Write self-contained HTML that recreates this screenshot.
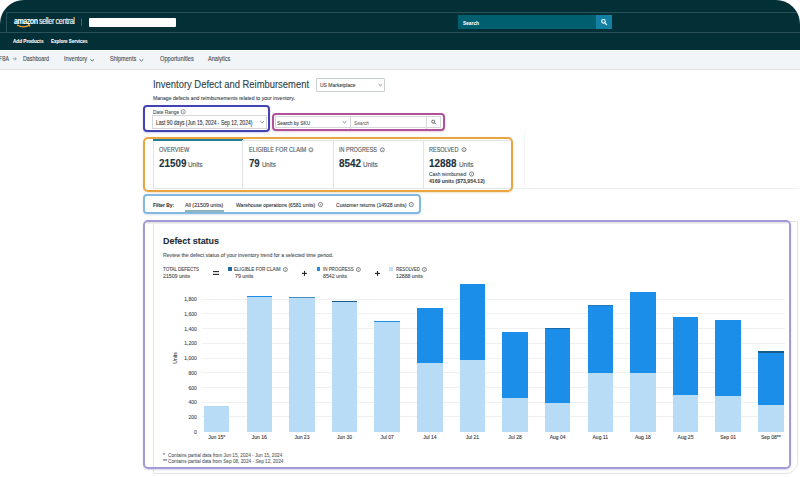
<!DOCTYPE html>
<html><head><meta charset="utf-8"><style>
html,body{margin:0;padding:0;}
body{width:800px;height:477px;overflow:hidden;position:relative;background:#fff;font-family:"Liberation Sans",sans-serif;}
.t{position:absolute;white-space:nowrap;transform-origin:0 0;-webkit-text-stroke:0.1px currentColor;}
.a{position:absolute;box-sizing:border-box;}
</style></head><body>
<!-- header -->
<div class="a" style="left:0;top:0;width:800px;height:50px;background:#032f37;border-radius:24px 24px 0 0;overflow:hidden;">
  <div class="a" style="left:6px;top:11.5px;width:794px;height:1.3px;background:#2c5259;"></div>
  <div class="a" style="left:0;top:31.5px;width:800px;height:1.3px;background:#2c5259;"></div>
  <div class="a" style="left:5.8px;top:12px;width:1.1px;height:20px;background:#2c5259;"></div>
</div>

<div class="a" style="left:89px;top:17.5px;width:87px;height:9px;background:#fff;border-radius:1px;"></div>
<div class="a" style="left:458px;top:15px;width:138px;height:14px;background:#005f6f;"></div>
<div class="a" style="left:596px;top:15px;width:16px;height:14px;background:#127fa3;"></div>
<svg class="a" style="left:0;top:0" width="800" height="50">
  <path d="M17 25 Q23.5 28.6 29.6 25.1" stroke="#eda33a" stroke-width="1.3" fill="none"/>
  <path d="M28 24.4 L30 24.9 L29.6 26.7" stroke="#eda33a" stroke-width="0.9" fill="none"/>
  <line x1="81.5" y1="18.5" x2="81.5" y2="25.8" stroke="#56737a" stroke-width="0.8"/>
  <circle cx="603.4" cy="21.3" r="1.8" stroke="#e8f6fa" stroke-width="1.2" fill="none"/>
  <line x1="604.8" y1="22.7" x2="606.6" y2="24.6" stroke="#e8f6fa" stroke-width="1.3" stroke-linecap="round"/>
</svg>
<!-- nav -->
<div class="a" style="left:0;top:51px;width:800px;height:19px;background:#f2f5f8;border-bottom:1px solid #e0e3e5;"></div>
<svg class="a" style="left:0;top:50px" width="300" height="20">
  <path d="M12.6 8.8 H16.3 M14.8 7.3 L16.4 8.8 L14.8 10.3" stroke="#8a9298" stroke-width="0.8" fill="none"/>
  <path d="M90.3 9.3 L92.2 11 L94.1 9.3" stroke="#4f5a62" stroke-width="0.9" fill="none"/>
  <path d="M139.5 9.3 L141.4 11 L143.3 9.3" stroke="#4f5a62" stroke-width="0.9" fill="none"/>
</svg>
<!-- US marketplace -->
<div class="a" style="left:316.3px;top:78px;width:69.2px;height:13.8px;border:1px solid #c9ced1;border-radius:1px;background:#fff;"></div>
<svg class="a" style="left:300px;top:70px" width="200" height="70">
  <path d="M378.6 14.2 L380.4 15.9 L382.2 14.2" transform="translate(-300,0)" stroke="#555" stroke-width="0.7" fill="none"/>
</svg>
<!-- date range (indigo) -->
<div class="a" style="left:143px;top:105.4px;width:127px;height:26.2px;border:2px solid #4343b3;border-radius:4px;box-shadow:0 1px 2px rgba(80,80,180,0.25);"></div>
<div class="a" style="left:152.4px;top:115.4px;width:115px;height:13.2px;border:1px solid #d5d9dc;background:#fff;"></div>
<!-- sku search (magenta) -->
<div class="a" style="left:272px;top:113.2px;width:172.6px;height:18.3px;border:2px solid #b0519a;border-radius:4px;box-shadow:0 1px 2px rgba(170,70,140,0.25);"></div>
<div class="a" style="left:274.6px;top:116.2px;width:166.2px;height:12.2px;border:1px solid #d5d9dc;background:#fff;"></div>
<div class="a" style="left:350.2px;top:116.4px;width:1px;height:12.4px;background:#d5d9dc;"></div>
<div class="a" style="left:426.3px;top:116.4px;width:1px;height:12.4px;background:#d5d9dc;"></div>
<svg class="a" style="left:0;top:0" width="800" height="477">
  <circle cx="183.2" cy="111.8" r="2.1" stroke="#555" stroke-width="0.6" fill="none"/>
  <line x1="183.2" y1="111.1" x2="183.2" y2="112.9" stroke="#555" stroke-width="0.5"/>
  <path d="M260.4 121.2 L262.2 122.9 L264 121.2" stroke="#555" stroke-width="0.7" fill="none"/>
  <path d="M342.8 121.3 L344.6 123 L346.4 121.3" stroke="#555" stroke-width="0.7" fill="none"/>
  <circle cx="433.2" cy="121.6" r="1.5" stroke="#444" stroke-width="0.8" fill="none"/>
  <line x1="434.3" y1="122.7" x2="435.7" y2="124.1" stroke="#444" stroke-width="0.9"/>
</svg>
<!-- tabs (orange) -->
<div class="a" style="left:152.5px;top:139.5px;width:360px;height:49.5px;border:1px solid #e3e6e8;border-right:none;background:#fff;"></div>
<div class="a" style="left:153px;top:139.3px;width:89.5px;height:2px;background:#2a7b95;"></div>
<div class="a" style="left:242.3px;top:140px;width:1px;height:49px;background:#e1e4e6;"></div>
<div class="a" style="left:332.8px;top:140px;width:1px;height:49px;background:#e1e4e6;"></div>
<div class="a" style="left:422.8px;top:140px;width:1px;height:49px;background:#e1e4e6;"></div>
<div class="a" style="left:143px;top:137px;width:370px;height:54.5px;border:2px solid #e9a540;border-radius:5px;box-shadow:0 1px 2px rgba(200,140,40,0.25);"></div>
<svg class="a" style="left:0;top:0" width="800" height="477">
  <g stroke="#555" stroke-width="0.7" fill="none">
<circle cx="311.0" cy="149.8" r="2.0"/><line x1="311.0" y1="149.50" x2="311.0" y2="151.00" stroke-width="0.5"/><line x1="311.0" y1="148.60" x2="311.0" y2="149.00" stroke-width="0.5"/>
<circle cx="382.3" cy="149.8" r="2.0"/><line x1="382.3" y1="149.50" x2="382.3" y2="151.00" stroke-width="0.5"/><line x1="382.3" y1="148.60" x2="382.3" y2="149.00" stroke-width="0.5"/>
<circle cx="464.0" cy="149.6" r="2.0"/><line x1="464.0" y1="149.30" x2="464.0" y2="150.80" stroke-width="0.5"/><line x1="464.0" y1="148.40" x2="464.0" y2="148.80" stroke-width="0.5"/>
<circle cx="471.6" cy="174.0" r="2.1"/><line x1="471.6" y1="173.70" x2="471.6" y2="175.02" stroke-width="0.5"/><line x1="471.6" y1="172.98" x2="471.6" y2="173.32" stroke-width="0.5"/>
<circle cx="320.5" cy="204.5" r="2.1"/><line x1="320.5" y1="204.20" x2="320.5" y2="205.52" stroke-width="0.5"/><line x1="320.5" y1="203.48" x2="320.5" y2="203.82" stroke-width="0.5"/>
<circle cx="411.3" cy="204.5" r="2.1"/><line x1="411.3" y1="204.20" x2="411.3" y2="205.52" stroke-width="0.5"/><line x1="411.3" y1="203.48" x2="411.3" y2="203.82" stroke-width="0.5"/>
<circle cx="285.4" cy="269.5" r="2"/><line x1="285.4" y1="269.20" x2="285.4" y2="270.58" stroke-width="0.5"/><line x1="285.4" y1="268.42" x2="285.4" y2="268.78" stroke-width="0.5"/>
<circle cx="358.4" cy="269.5" r="2"/><line x1="358.4" y1="269.20" x2="358.4" y2="270.58" stroke-width="0.5"/><line x1="358.4" y1="268.42" x2="358.4" y2="268.78" stroke-width="0.5"/>
<circle cx="424.4" cy="269.5" r="2"/><line x1="424.4" y1="269.20" x2="424.4" y2="270.58" stroke-width="0.5"/><line x1="424.4" y1="268.42" x2="424.4" y2="268.78" stroke-width="0.5"/>
</g>
</svg>
<div class="a" style="left:513px;top:187.8px;width:285px;height:1px;background:#eceeef;"></div>
<div class="a" style="left:524px;top:131px;width:1px;height:57px;background:#f4f5f5;"></div>
<!-- filter (light blue) -->
<div class="a" style="left:143.3px;top:194px;width:277.7px;height:20px;border:2px solid #84b9df;border-radius:4px;box-shadow:0 1px 2px rgba(100,150,200,0.25);"></div>
<div class="a" style="left:185px;top:210px;width:39px;height:1.6px;background:#8fb1bc;"></div>
<!-- defect status panel -->
<div class="a" style="left:152.7px;top:221px;width:645.5px;height:253.4px;border:1px solid #e2e4e6;border-radius:0 0 12px 0;"></div>
<div class="a" style="left:147px;top:222px;width:640px;height:1.6px;background:linear-gradient(#dedede,#f2f2f2);"></div>
<div class="a" style="left:143px;top:220px;width:648px;height:249px;border:2px solid #a39bd8;border-radius:5px;box-shadow:0 1px 2px rgba(120,110,200,0.3);"></div>
<div class="a" style="left:228px;top:267px;width:3.6px;height:4.3px;background:#1c6a9e;"></div>
<div class="a" style="left:316.6px;top:267px;width:3.6px;height:4.3px;background:#1a8fe3;"></div>
<div class="a" style="left:389.4px;top:267px;width:3.6px;height:4.3px;background:#c3def5;"></div>
<svg class="a" style="left:0;top:0" width="800" height="477">
  <g stroke="#222" stroke-width="1.1">
    <line x1="213" y1="271.6" x2="219" y2="271.6"/><line x1="213" y1="274.4" x2="219" y2="274.4"/>
    <line x1="302" y1="273.4" x2="307" y2="273.4"/><line x1="304.5" y1="270.9" x2="304.5" y2="275.9"/>
    <line x1="375" y1="273.4" x2="380" y2="273.4"/><line x1="377.5" y1="270.9" x2="377.5" y2="275.9"/>
  </g>
</svg>
<!-- chart -->
<div class="a" style="left:201.6px;top:416.39px;width:583.8px;height:1px;background:#f0f0f0;"></div>
<div class="a" style="left:201.6px;top:401.68px;width:583.8px;height:1px;background:#f0f0f0;"></div>
<div class="a" style="left:201.6px;top:386.97px;width:583.8px;height:1px;background:#f0f0f0;"></div>
<div class="a" style="left:201.6px;top:372.26px;width:583.8px;height:1px;background:#f0f0f0;"></div>
<div class="a" style="left:201.6px;top:357.55px;width:583.8px;height:1px;background:#f0f0f0;"></div>
<div class="a" style="left:201.6px;top:342.84px;width:583.8px;height:1px;background:#f0f0f0;"></div>
<div class="a" style="left:201.6px;top:328.13px;width:583.8px;height:1px;background:#f0f0f0;"></div>
<div class="a" style="left:201.6px;top:313.42px;width:583.8px;height:1px;background:#f0f0f0;"></div>
<div class="a" style="left:201.6px;top:298.71px;width:583.8px;height:1px;background:#f0f0f0;"></div>
<div class="a" style="left:203.95px;top:405.70px;width:25.5px;height:25.90px;background:#b8dcf6;"></div>
<div class="a" style="left:246.57px;top:296.40px;width:25.5px;height:135.20px;background:#b8dcf6;"></div>
<div class="a" style="left:246.57px;top:295.60px;width:25.5px;height:0.80px;background:#1a8ee8;"></div>
<div class="a" style="left:289.19px;top:297.60px;width:25.5px;height:134.00px;background:#b8dcf6;"></div>
<div class="a" style="left:289.19px;top:296.90px;width:25.5px;height:0.70px;background:#4a8cc0;"></div>
<div class="a" style="left:331.81px;top:302.00px;width:25.5px;height:129.60px;background:#b8dcf6;"></div>
<div class="a" style="left:331.81px;top:300.80px;width:25.5px;height:1.20px;background:#165d8e;"></div>
<div class="a" style="left:374.43px;top:321.70px;width:25.5px;height:109.90px;background:#b8dcf6;"></div>
<div class="a" style="left:374.43px;top:320.70px;width:25.5px;height:1.00px;background:#1a8ee8;"></div>
<div class="a" style="left:417.05px;top:362.60px;width:25.5px;height:69.00px;background:#b8dcf6;"></div>
<div class="a" style="left:417.05px;top:308.10px;width:25.5px;height:54.50px;background:#1a8ee8;"></div>
<div class="a" style="left:459.67px;top:360.10px;width:25.5px;height:71.50px;background:#b8dcf6;"></div>
<div class="a" style="left:459.67px;top:284.40px;width:25.5px;height:75.70px;background:#1a8ee8;"></div>
<div class="a" style="left:502.29px;top:398.00px;width:25.5px;height:33.60px;background:#b8dcf6;"></div>
<div class="a" style="left:502.29px;top:331.70px;width:25.5px;height:66.30px;background:#1a8ee8;"></div>
<div class="a" style="left:544.91px;top:403.30px;width:25.5px;height:28.30px;background:#b8dcf6;"></div>
<div class="a" style="left:544.91px;top:328.70px;width:25.5px;height:74.60px;background:#1a8ee8;"></div>
<div class="a" style="left:544.91px;top:327.90px;width:25.5px;height:0.80px;background:#1a6aaa;"></div>
<div class="a" style="left:587.53px;top:373.40px;width:25.5px;height:58.20px;background:#b8dcf6;"></div>
<div class="a" style="left:587.53px;top:305.80px;width:25.5px;height:67.60px;background:#1a8ee8;"></div>
<div class="a" style="left:587.53px;top:305.10px;width:25.5px;height:0.70px;background:#1f78c0;"></div>
<div class="a" style="left:630.15px;top:373.40px;width:25.5px;height:58.20px;background:#b8dcf6;"></div>
<div class="a" style="left:630.15px;top:292.30px;width:25.5px;height:81.10px;background:#1a8ee8;"></div>
<div class="a" style="left:672.77px;top:395.30px;width:25.5px;height:36.30px;background:#b8dcf6;"></div>
<div class="a" style="left:672.77px;top:316.80px;width:25.5px;height:78.50px;background:#1a8ee8;"></div>
<div class="a" style="left:715.39px;top:395.80px;width:25.5px;height:35.80px;background:#b8dcf6;"></div>
<div class="a" style="left:715.39px;top:319.60px;width:25.5px;height:76.20px;background:#1a8ee8;"></div>
<div class="a" style="left:758.01px;top:405.00px;width:25.5px;height:26.60px;background:#b8dcf6;"></div>
<div class="a" style="left:758.01px;top:353.00px;width:25.5px;height:52.00px;background:#1a8ee8;"></div>
<div class="a" style="left:758.01px;top:351.30px;width:25.5px;height:1.70px;background:#165d8e;"></div>
<div class="t" style="left:175px;top:358px;font-size:5px;line-height:5px;color:#444;transform:translate(-50%,-50%) rotate(-90deg);transform-origin:50% 50%;">Units</div>

<span class="t" id="t0" style="left:13.50px;top:17.00px;font-size:8.6px;line-height:8.6px;color:#ffffff;font-weight:700;letter-spacing:-0.6px;transform:scaleX(0.8273);">amazon</span>
<span class="t" id="t1" style="left:38.50px;top:17.00px;font-size:8.6px;line-height:8.6px;color:#ffffff;letter-spacing:-0.45px;transform:scaleX(0.8368);">seller central</span>
<span class="t" id="t2" style="left:463.00px;top:21.00px;font-size:5.8px;line-height:5.8px;color:#f4f8f8;font-weight:700;transform:scaleX(0.8271);">Search</span>
<span class="t" id="t3" style="left:13.00px;top:39.00px;font-size:5.6px;line-height:5.6px;color:#ffffff;font-weight:700;transform:scaleX(0.8317);">Add Products</span>
<span class="t" id="t4" style="left:50.50px;top:39.00px;font-size:5.6px;line-height:5.6px;color:#ffffff;font-weight:700;transform:scaleX(0.8094);">Explore Services</span>
<span class="t" id="t5" style="left:-1.00px;top:56.00px;font-size:6.3px;line-height:6.3px;color:#434d55;transform:scaleX(0.8163);">FBA</span>
<span class="t" id="t6" style="left:23.00px;top:56.00px;font-size:6.3px;line-height:6.3px;color:#434d55;transform:scaleX(0.8438);">Dashboard</span>
<span class="t" id="t7" style="left:63.80px;top:56.00px;font-size:6.3px;line-height:6.3px;color:#434d55;transform:scaleX(0.8955);">Inventory</span>
<span class="t" id="t8" style="left:110.00px;top:56.00px;font-size:6.3px;line-height:6.3px;color:#434d55;transform:scaleX(0.8802);">Shipments</span>
<span class="t" id="t9" style="left:159.50px;top:56.00px;font-size:6.3px;line-height:6.3px;color:#434d55;transform:scaleX(0.9025);">Opportunities</span>
<span class="t" id="t10" style="left:207.60px;top:56.00px;font-size:6.3px;line-height:6.3px;color:#434d55;transform:scaleX(0.8848);">Analytics</span>
<span class="t" id="t11" style="left:153.00px;top:80.00px;font-size:10px;line-height:10px;color:#2c3e4a;transform:scaleX(0.9418);">Inventory Defect and Reimbursement</span>
<span class="t" id="t12" style="left:153.00px;top:96.00px;font-size:5.3px;line-height:5.3px;color:#3d4850;transform:scaleX(0.9658);">Manage defects and reimbursements related to your inventory.</span>
<span class="t" id="t13" style="left:320.10px;top:83.00px;font-size:5.4px;line-height:5.4px;color:#444;transform:scaleX(0.9255);">US Marketplace</span>
<span class="t" id="t14" style="left:152.80px;top:109.00px;font-size:6px;line-height:6px;color:#555;transform:scaleX(0.8180);">Date Range</span>
<span class="t" id="t15" style="left:156.10px;top:120.00px;font-size:6.3px;line-height:6.3px;color:#333;transform:scaleX(0.7959);">Last 90 days (Jun 15, 2024 - Sep 12, 2024)</span>
<span class="t" id="t16" style="left:276.80px;top:121.00px;font-size:5.8px;line-height:5.8px;color:#444;transform:scaleX(0.8375);">Search by SKU</span>
<span class="t" id="t17" style="left:353.90px;top:121.00px;font-size:5.8px;line-height:5.8px;color:#777;font-style:italic;transform:scaleX(0.8163);">Search</span>
<span class="t" id="t18" style="left:158.60px;top:147.00px;font-size:6.3px;line-height:6.3px;color:#4a5359;transform:scaleX(0.8927);">OVERVIEW</span>
<span class="t" id="t19" style="left:248.80px;top:147.00px;font-size:6.3px;line-height:6.3px;color:#4a5359;transform:scaleX(0.8931);">ELIGIBLE FOR CLAIM</span>
<span class="t" id="t20" style="left:338.80px;top:147.00px;font-size:6.3px;line-height:6.3px;color:#4a5359;transform:scaleX(0.8686);">IN PROGRESS</span>
<span class="t" id="t21" style="left:429.30px;top:147.00px;font-size:6.3px;line-height:6.3px;color:#4a5359;transform:scaleX(0.8721);">RESOLVED</span>
<span class="t" id="t22" style="left:158.60px;top:159.00px;font-size:10.3px;line-height:10.3px;color:#22313a;font-weight:700;transform:scaleX(0.9567);">21509</span>
<span class="t" id="t23" style="left:188.10px;top:162.00px;font-size:6.4px;line-height:6.4px;color:#555;transform:scaleX(0.9957);">Units</span>
<span class="t" id="t24" style="left:248.80px;top:159.00px;font-size:10.3px;line-height:10.3px;color:#22313a;font-weight:700;transform:scaleX(0.9330);">79</span>
<span class="t" id="t25" style="left:262.00px;top:162.00px;font-size:6.4px;line-height:6.4px;color:#555;transform:scaleX(0.9476);">Units</span>
<span class="t" id="t26" style="left:338.80px;top:159.00px;font-size:10.3px;line-height:10.3px;color:#22313a;font-weight:700;transform:scaleX(0.9641);">8542</span>
<span class="t" id="t27" style="left:362.80px;top:162.00px;font-size:6.4px;line-height:6.4px;color:#555;transform:scaleX(1.0094);">Units</span>
<span class="t" id="t28" style="left:429.30px;top:159.00px;font-size:10.3px;line-height:10.3px;color:#22313a;font-weight:700;transform:scaleX(0.9602);">12888</span>
<span class="t" id="t29" style="left:458.80px;top:162.00px;font-size:6.4px;line-height:6.4px;color:#555;transform:scaleX(0.9957);">Units</span>
<span class="t" id="t30" style="left:429.30px;top:172.00px;font-size:5.6px;line-height:5.6px;color:#3d4a52;transform:scaleX(0.8710);">Cash reimbursed</span>
<span class="t" id="t31" style="left:429.30px;top:179.00px;font-size:5.0px;line-height:5.0px;color:#4a4a4a;font-weight:700;transform:scaleX(1.0276);">4169 units ($73,954.12)</span>
<span class="t" id="t32" style="left:152.75px;top:203.00px;font-size:5.6px;line-height:5.6px;color:#333;font-weight:700;transform:scaleX(0.8660);">Filter By:</span>
<span class="t" id="t33" style="left:185.00px;top:203.00px;font-size:5.6px;line-height:5.6px;color:#333;transform:scaleX(0.9475);">All (21509 units)</span>
<span class="t" id="t34" style="left:236.25px;top:203.00px;font-size:5.6px;line-height:5.6px;color:#333;transform:scaleX(0.9097);">Warehouse operations (6581 units)</span>
<span class="t" id="t35" style="left:335.75px;top:203.00px;font-size:5.6px;line-height:5.6px;color:#333;transform:scaleX(0.9106);">Customer returns (14928 units)</span>
<span class="t" id="t36" style="left:163.00px;top:236.00px;font-size:9.6px;line-height:9.6px;color:#1f2d36;font-weight:700;transform:scaleX(0.9295);">Defect status</span>
<span class="t" id="t37" style="left:163.00px;top:253.00px;font-size:5.0px;line-height:5.0px;color:#555;transform:scaleX(1.0345);">Review the defect status of your inventory trend for a selected time period.</span>
<span class="t" id="t38" style="left:163.00px;top:267.00px;font-size:5.0px;line-height:5.0px;color:#4a4a4a;transform:scaleX(0.8955);">TOTAL DEFECTS</span>
<span class="t" id="t39" style="left:163.00px;top:274.00px;font-size:5.0px;line-height:5.0px;color:#4a4a4a;transform:scaleX(1.0441);">21509 units</span>
<span class="t" id="t40" style="left:234.00px;top:267.00px;font-size:5.0px;line-height:5.0px;color:#4a4a4a;transform:scaleX(0.9163);">ELIGIBLE FOR CLAIM</span>
<span class="t" id="t41" style="left:234.60px;top:274.00px;font-size:5.0px;line-height:5.0px;color:#4a4a4a;transform:scaleX(1.0562);">79 units</span>
<span class="t" id="t42" style="left:323.00px;top:267.00px;font-size:5.0px;line-height:5.0px;color:#4a4a4a;transform:scaleX(0.8810);">IN PROGRESS</span>
<span class="t" id="t43" style="left:323.00px;top:274.00px;font-size:5.0px;line-height:5.0px;color:#4a4a4a;transform:scaleX(1.0399);">8542 units</span>
<span class="t" id="t44" style="left:395.60px;top:267.00px;font-size:5.0px;line-height:5.0px;color:#4a4a4a;transform:scaleX(0.8930);">RESOLVED</span>
<span class="t" id="t45" style="left:395.60px;top:274.00px;font-size:5.0px;line-height:5.0px;color:#4a4a4a;transform:scaleX(1.0364);">12888 units</span>
<span class="t" id="t46" style="left:194.02px;top:430.00px;font-size:5.0px;line-height:5.0px;color:#4a4a4a;">0</span>
<span class="t" id="t47" style="left:188.46px;top:415.00px;font-size:5.0px;line-height:5.0px;color:#4a4a4a;">200</span>
<span class="t" id="t48" style="left:188.46px;top:400.00px;font-size:5.0px;line-height:5.0px;color:#4a4a4a;">400</span>
<span class="t" id="t49" style="left:188.46px;top:386.00px;font-size:5.0px;line-height:5.0px;color:#4a4a4a;">600</span>
<span class="t" id="t50" style="left:188.46px;top:371.00px;font-size:5.0px;line-height:5.0px;color:#4a4a4a;">800</span>
<span class="t" id="t51" style="left:184.28px;top:356.00px;font-size:5.0px;line-height:5.0px;color:#4a4a4a;">1,000</span>
<span class="t" id="t52" style="left:184.28px;top:341.00px;font-size:5.0px;line-height:5.0px;color:#4a4a4a;">1,200</span>
<span class="t" id="t53" style="left:184.28px;top:327.00px;font-size:5.0px;line-height:5.0px;color:#4a4a4a;">1,400</span>
<span class="t" id="t54" style="left:184.28px;top:312.00px;font-size:5.0px;line-height:5.0px;color:#4a4a4a;">1,600</span>
<span class="t" id="t55" style="left:184.28px;top:297.00px;font-size:5.0px;line-height:5.0px;color:#4a4a4a;">1,800</span>
<span class="t" id="t56" style="left:208.22px;top:435.00px;font-size:5.0px;line-height:5.0px;color:#3a3a3a;">Jun 15*</span>
<span class="t" id="t57" style="left:251.81px;top:435.00px;font-size:5.0px;line-height:5.0px;color:#3a3a3a;">Jun 16</span>
<span class="t" id="t58" style="left:294.43px;top:435.00px;font-size:5.0px;line-height:5.0px;color:#3a3a3a;">Jun 23</span>
<span class="t" id="t59" style="left:337.05px;top:435.00px;font-size:5.0px;line-height:5.0px;color:#3a3a3a;">Jun 30</span>
<span class="t" id="t60" style="left:380.51px;top:435.00px;font-size:5.0px;line-height:5.0px;color:#3a3a3a;">Jul 07</span>
<span class="t" id="t61" style="left:423.13px;top:435.00px;font-size:5.0px;line-height:5.0px;color:#3a3a3a;">Jul 14</span>
<span class="t" id="t62" style="left:465.75px;top:435.00px;font-size:5.0px;line-height:5.0px;color:#3a3a3a;">Jul 21</span>
<span class="t" id="t63" style="left:508.37px;top:435.00px;font-size:5.0px;line-height:5.0px;color:#3a3a3a;">Jul 28</span>
<span class="t" id="t64" style="left:549.73px;top:435.00px;font-size:5.0px;line-height:5.0px;color:#3a3a3a;">Aug 04</span>
<span class="t" id="t65" style="left:592.54px;top:435.00px;font-size:5.0px;line-height:5.0px;color:#3a3a3a;">Aug 11</span>
<span class="t" id="t66" style="left:634.97px;top:435.00px;font-size:5.0px;line-height:5.0px;color:#3a3a3a;">Aug 18</span>
<span class="t" id="t67" style="left:677.59px;top:435.00px;font-size:5.0px;line-height:5.0px;color:#3a3a3a;">Aug 25</span>
<span class="t" id="t68" style="left:720.21px;top:435.00px;font-size:5.0px;line-height:5.0px;color:#3a3a3a;">Sep 01</span>
<span class="t" id="t69" style="left:760.88px;top:435.00px;font-size:5.0px;line-height:5.0px;color:#3a3a3a;">Sep 08**</span>
<span class="t" id="t70" style="left:163.00px;top:453.00px;font-size:5.2px;line-height:5.2px;color:#666;">*</span>
<span class="t" id="t71" style="left:168.00px;top:453.00px;font-size:5.2px;line-height:5.2px;color:#666;transform:scaleX(0.9111);">Contains partial data from Jun 15, 2024 - Jun 15, 2024</span>
<span class="t" id="t72" style="left:163.00px;top:459.00px;font-size:5.2px;line-height:5.2px;color:#666;">**</span>
<span class="t" id="t73" style="left:168.00px;top:459.00px;font-size:5.2px;line-height:5.2px;color:#666;transform:scaleX(0.9073);">Contains partial data from Sep 08, 2024 - Sep 12, 2024</span>
</body></html>
